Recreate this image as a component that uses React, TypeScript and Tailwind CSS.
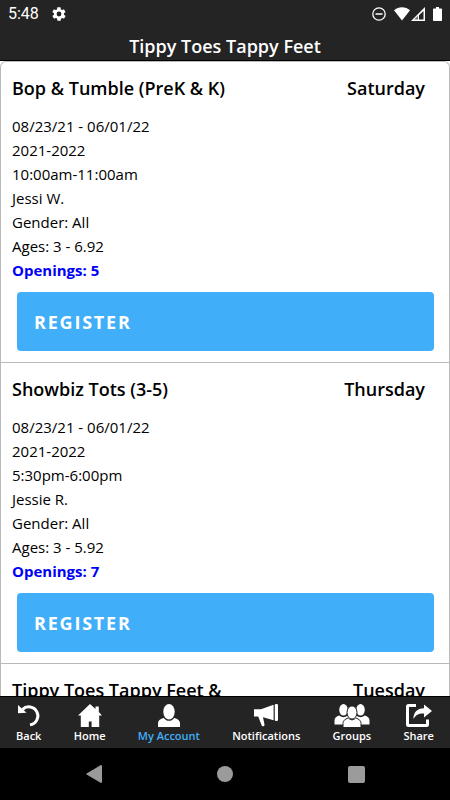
import type { ReactNode } from "react";

type ClassInfo = {
  name: string;
  day: string;
  dates: string;
  session: string;
  time: string;
  teacher: string;
  gender: string;
  ages: string;
  openings: number;
};

const classes: ClassInfo[] = [
  {
    name: "Bop & Tumble (PreK & K)",
    day: "Saturday",
    dates: "08/23/21 - 06/01/22",
    session: "2021-2022",
    time: "10:00am-11:00am",
    teacher: "Jessi W.",
    gender: "All",
    ages: "3 - 6.92",
    openings: 5,
  },
  {
    name: "Showbiz Tots (3-5)",
    day: "Thursday",
    dates: "08/23/21 - 06/01/22",
    session: "2021-2022",
    time: "5:30pm-6:00pm",
    teacher: "Jessie R.",
    gender: "All",
    ages: "3 - 5.92",
    openings: 7,
  },
];

function StatusBar() {
  return (
    <div className="flex h-7 items-center justify-between pr-2 pl-2 text-white">
      <div className="flex items-center gap-3">
        <span className="font-[Roboto,sans-serif] text-base leading-7">5:48</span>
        <svg className="size-4" viewBox="0 0 24 24" fill="currentColor" aria-hidden="true">
          <path d="M19.4 13c0-.3.1-.6.1-1s0-.7-.1-1l2.1-1.600c.2-.2.3-.4.1-.7l-2-3.400c-.1-.2-.4-.3-.6-.2l-2.500 1c-.5-.4-1.100-.7-1.700-1l-.4-2.600c0-.3-.2-.5-.5-.5h-4c-.2 0-.4.200-.5.400l-.4 2.700c-.6.2-1.100.6-1.700 1l-2.500-1c-.2-.1-.4 0-.6.2l-2 3.400c-.1.300 0 .5.200.7L4.500 11c0 .3-.1.600-.1 1s0 .7.100 1l-2.100 1.600c-.2.200-.3.400-.1.700l2 3.400c.1.200.3.300.6.200l2.500-1c.5.400 1.100.700 1.700 1l.4 2.600c0 .3.200.5.500.5h4c.2 0 .5-.2.500-.4l.4-2.700c.6-.2 1.100-.6 1.700-1l2.500 1c.2.100.5 0 .6-.2l2-3.400c.1-.2.100-.5-.1-.7L19.400 13zM12 15.600a3.600 3.600 0 1 1 0-7.200 3.600 3.600 0 0 1 0 7.200z" />
        </svg>
      </div>
      <div className="flex items-center">
        <svg className="mr-2 size-[14px]" viewBox="0 0 14 14" fill="none" stroke="currentColor" aria-hidden="true">
          <circle cx="7" cy="7" r="6.200" strokeWidth="1.300" />
          <path d="M3.500 7h7" strokeWidth="1.500" />
        </svg>
        <svg className="mr-px h-[14px] w-4" viewBox="0 0 16 14" fill="currentColor" aria-hidden="true">
          <path d="M0 3.200C4.500-.8 11.500-.8 16 3.200L8 13.600z" />
        </svg>
        <svg className="mr-2 size-[14px]" viewBox="0 0 14 14" aria-hidden="true">
          <path d="M14 0v14H0z" fill="currentColor" />
          <path d="M12.500 4v8.500H8V8.200z" fill="#242424" />
          <path d="M3.200 12.600 7 8.800v3.800z" fill="#777" />
        </svg>
        <svg className="h-[14px] w-[9px]" viewBox="0 0 9 14" fill="currentColor" aria-hidden="true">
          <path d="M3 0h3v1.400h2.200q.8 0 .8.800v11q0 .8-.8.800H.8q-.8 0-.8-.8v-11q0-.8.8-.8H3z" />
        </svg>
      </div>
    </div>
  );
}

function CardTitle({ name, day }: { name: string; day: string }) {
  return (
    <div className="flex justify-between pr-6 pl-[11px] text-lg leading-6 font-semibold">
      <h2 className="w-60">{name}</h2>
      <span>{day}</span>
    </div>
  );
}

function ClassCard({ info }: { info: ClassInfo }) {
  return (
    <article className="border-b border-[#bababa] pt-[14px] pb-[11px]">
      <CardTitle name={info.name} day={info.day} />
      <div className="mt-[14px] pl-[11px] text-[15px] leading-6">
        <p>{info.dates}</p>
        <p>{info.session}</p>
        <p>{info.time}</p>
        <p>{info.teacher}</p>
        <p>Gender: {info.gender}</p>
        <p>Ages: {info.ages}</p>
        <p className="font-bold text-[#0000f5]">Openings: {info.openings}</p>
      </div>
      <div className="mt-[10px] pr-[15px] pl-4">
        <button
          type="button"
          className="h-[59px] w-full rounded bg-[#40aef9] px-[17px] text-left text-lg font-bold tracking-widest text-white"
        >
          REGISTER
        </button>
      </div>
    </article>
  );
}

function Tab({ label, active, children }: { label: string; active?: boolean; children: ReactNode }) {
  return (
    <a
      href="#"
      className={`flex flex-col items-center text-[11px] leading-4 font-semibold ${active ? "text-[#40aef9]" : "text-white"}`}
    >
      <span className="h-6 text-white">{children}</span>
      {label}
    </a>
  );
}

function TabBar() {
  return (
    <nav className="flex h-[52px] shrink-0 justify-between border-t border-black bg-[#242424] px-4 pt-[7px]">
      <Tab label="Back">
        <svg className="size-6" viewBox="0 0 24 24" aria-hidden="true">
          <path d="M5.400 5.600A9 9 0 1 1 13 20.800" fill="none" stroke="currentColor" strokeWidth="3" />
          <path d="M1 1v8.300l8.500-.6z" fill="currentColor" />
        </svg>
      </Tab>
      <Tab label="Home">
        <svg className="size-6" viewBox="0 0 24 24" fill="currentColor" aria-hidden="true">
          <path d="M12 0l5.500 5V2.500h3.300V8l3.200 3.400h-2.800V23h-7.600v-5.500h-2.800V23H2.800V11.400H0z" />
        </svg>
      </Tab>
      <Tab label="My Account" active>
        <svg className="size-6" viewBox="0 0 24 24" fill="currentColor" aria-hidden="true">
          <ellipse cx="12" cy="7.800" rx="5.700" ry="7.800" />
          <path d="M1 23v-3.500c0-3 2-4.500 5.800-5.500 3 3.800 7.400 3.800 10.400 0 3.800 1 5.800 2.500 5.800 5.500V23z" />
        </svg>
      </Tab>
      <Tab label="Notifications">
        <svg className="size-6" viewBox="0 0 24 24" fill="currentColor" aria-hidden="true">
          <path d="M0 5.200h7L19.600.7v15.600L9 13.300l1.500 7.300q.2 1.200-.8 1.600-1.300.5-2-.7L4.200 12.500H0z" />
          <rect x="20.800" y="0" width="3.200" height="17" rx="1.200" />
        </svg>
      </Tab>
      <Tab label="Groups">
        <svg className="h-6 w-9" viewBox="0 0 36 24" fill="currentColor" aria-hidden="true">
          <ellipse cx="9.500" cy="5.800" rx="4.300" ry="5.800" />
          <ellipse cx="26.500" cy="5.800" rx="4.300" ry="5.800" />
          <path d="M.5 20.500v-4c0-2.500 1.500-4 5-5 2.500 2.300 5.500 2.300 8 0l3 3.500v5.500zM35.500 20.500v-4c0-2.500-1.500-4-5-5-2.500 2.300-5.500 2.300-8 0l-3 3.500v5.500z" />
          <g stroke="#242424" strokeWidth="1">
            <path d="M9 23.500v-4c0-2.600 1.500-4.200 5.300-5.500 2.500 2.400 4.900 2.400 7.400 0 3.800 1.300 5.300 2.900 5.300 5.500v4z" />
            <ellipse cx="18" cy="8.500" rx="5" ry="6.600" />
          </g>
        </svg>
      </Tab>
      <Tab label="Share">
        <svg className="h-6 w-[26px]" viewBox="0 0 26 24" aria-hidden="true">
          <path
            d="M10 1.500H2.500q-1 0-1 1v18q0 1 1 1h18q1 0 1-1V15.500"
            fill="none"
            stroke="currentColor"
            strokeWidth="3"
          />
          <path d="M18 .5 26 7l-8 6.500v-4c-5-.3-8 1-10.600 5.500C7.400 8.500 11 4.300 18 4.200z" fill="currentColor" />
        </svg>
      </Tab>
    </nav>
  );
}

function SystemNav() {
  return (
    <div className="flex h-[52px] shrink-0 items-center justify-around bg-black px-7 text-[#9b9b9b]">
      <button type="button" aria-label="Back">
        <svg className="h-[18px] w-4" viewBox="0 0 16 18" fill="currentColor">
          <path d="M15 0q1 0 1 1v16q0 1-1 1L.6 9.600q-.8-.6 0-1.200z" />
        </svg>
      </button>
      <button type="button" aria-label="Home" className="size-4 rounded-full bg-current" />
      <button type="button" aria-label="Overview" className="size-[17px] rounded-xs bg-current" />
    </div>
  );
}

export default function App() {
  return (
    <div className="flex h-screen flex-col bg-black font-['Open_Sans',sans-serif] text-black">
      <header className="shrink-0 border-b border-black bg-[#242424]">
        <StatusBar />
        <h1 className="pt-1.5 pb-0.5 text-center text-lg leading-6 font-semibold text-white">
          Tippy Toes Tappy Feet
        </h1>
      </header>
      <main className="min-h-0 flex-1 overflow-hidden bg-white">
        <div className="rounded-t-md border-x border-t border-[#bababa]">
          {classes.map((info) => (
            <ClassCard key={info.name} info={info} />
          ))}
          <article className="pt-[14px]">
            <CardTitle name="Tippy Toes Tappy Feet &" day="Tuesday" />
          </article>
        </div>
      </main>
      <TabBar />
      <SystemNav />
    </div>
  );
}
